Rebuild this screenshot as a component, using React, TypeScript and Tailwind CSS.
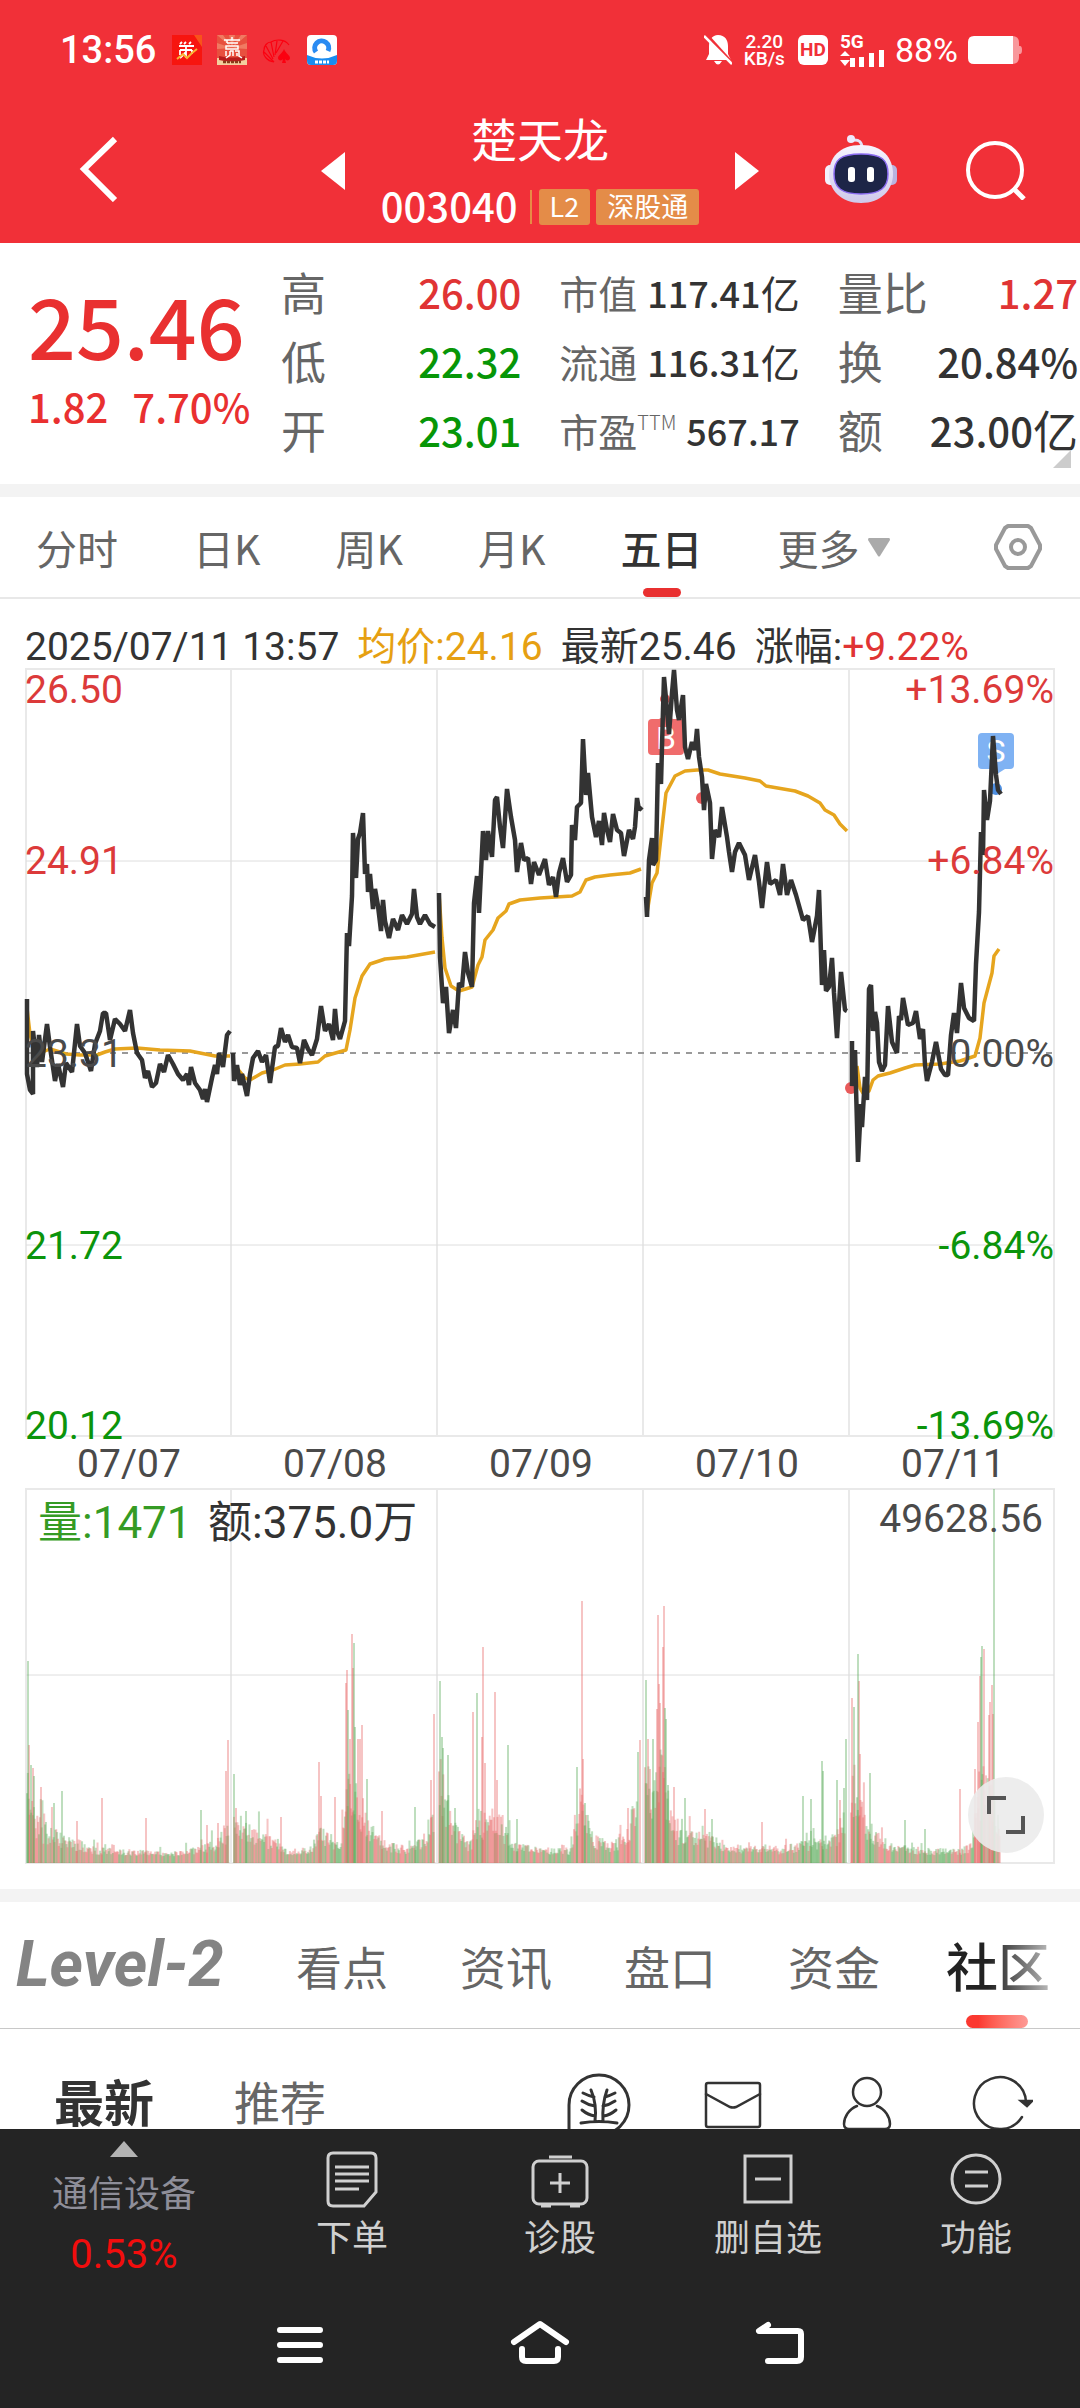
import type { ReactNode } from "react";

type Point = [number, number];

const quotes = [
  [
    { label: "高", value: "26.00", color: "text-[#e03434]" },
    { label: "低", value: "22.32", color: "text-[#079607]" },
    { label: "开", value: "23.01", color: "text-[#079607]" },
  ],
  [
    { label: "量比", value: "1.27", color: "text-[#e03434]" },
    { label: "换", value: "20.84%", color: "text-[#333]" },
    { label: "额", value: "23.00", unit: "亿", color: "text-[#333]" },
  ],
];

const marketValues = [
  { label: "市值", value: "117.41", unit: "亿" },
  { label: "流通", value: "116.31", unit: "亿" },
  { label: "市盈", sup: "TTM", value: "567.17" },
];

const days = ["07/07", "07/08", "07/09", "07/10", "07/11"];
const dayLines = [26, 231, 437, 643, 849, 1054];

const prices = [
  "27,331 27,406 30,422 33,426 33,363 37,399 39,367 42,394 47,356 50,379 55,413 58,396 63,419 66,395 72,404 77,356 80,378 85,385 91,403 95,376 100,363 103,345 106,345 110,372 115,351 120,356 125,363 130,342 133,365 137,385 142,392 145,410 148,403 152,419 156,415 160,396 164,404 168,387 173,396 178,406 183,412 187,406 189,417 191,399 195,415 200,422 203,431 205,421 207,434 212,410 215,397 217,406 219,385 223,399 227,367 230,363",
  "233,385 234,413 237,397 240,417 242,406 247,428 250,406 253,390 258,383 262,394 266,387 270,415 275,379 278,378 281,360 285,374 288,367 292,379 297,380 300,395 304,372 308,381 312,387 317,371 321,338 325,363 329,356 333,372 335,341 337,363 340,371 345,353 347,265 349,278 352,228 353,165 356,210 358,171 360,165 363,145 365,206 367,196 368,224 370,206 373,241 375,221 378,238 381,263 383,232 385,253 389,270 393,251 398,262 402,247 407,256 412,246 414,221 417,249 420,256 425,247 430,256 435,259",
  "439,225 440,289 443,335 446,319 449,365 453,342 456,360 459,315 462,319 465,284 468,305 472,319 474,235 477,208 479,245 483,163 486,192 488,163 492,189 495,132 497,129 500,159 503,180 507,121 511,149 515,172 517,204 521,175 524,192 528,190 531,216 534,194 539,207 545,191 549,217 553,209 556,229 559,205 563,190 567,214 571,207 572,157 575,172 577,139 581,135 583,71 586,127 588,105 592,149 596,169 599,153 602,177 604,145 607,162 610,174 613,146 617,162 621,165 624,188 629,162 633,171 635,159 637,130 639,142 642,139",
  "646,229 647,249 649,192 652,170 653,197 656,192 658,95 661,116 663,42 664,9 667,42 669,66 672,25 674,2 677,42 679,52 683,27 685,79 688,91 692,74 695,82 697,61 699,89 702,109 704,142 706,116 710,135 712,191 715,162 719,169 722,139 727,169 729,184 732,204 735,184 739,175 745,187 749,212 755,187 759,214 762,240 767,194 770,216 776,212 780,227 783,196 787,227 791,212 796,227 803,252 808,248 812,274 817,248 819,222 822,317 824,282 826,323 829,319 832,290 834,325 837,370 841,304 845,342 847,343",
  "852,373 852,418 855,382 858,494 861,436 862,459 865,409 867,432 869,321 871,317 873,363 875,344 877,355 879,394 882,403 885,397 888,338 892,374 897,385 899,348 901,352 903,330 908,357 913,355 916,343 920,371 923,361 925,397 927,413 932,394 936,374 941,401 945,407 948,407 951,367 954,345 957,365 961,315 964,340 969,350 974,353 976,296 979,244 981,164 983,187 984,122 987,152 990,133 993,68 996,107 998,122 1001,126",
];

const averages = [
  "27,340 30,366 35,385 45,383 50,381 60,384 66,386 80,387 97,387 105,384 115,381 137,380 160,382 190,383 205,386 215,388 230,388",
  "237,400 245,410 250,412 262,405 273,402 285,397 300,396 318,394 325,388 346,382 350,362 355,330 362,308 370,296 385,291 407,289 435,284",
  "439,225 442,270 445,300 451,318 459,323 472,319 478,297 482,289 485,272 493,262 498,250 506,243 509,236 520,232 540,230 572,228 580,224 586,212 595,209 610,207 630,205 641,201",
  "647,245 652,215 657,205 662,160 666,125 675,108 685,103 697,102 708,102 720,106 745,110 760,113 766,118 795,123 808,128 820,135 825,142 834,147 840,156 847,163",
  "857,398 860,420 863,425 869,423 873,412 878,408 890,405 905,400 915,397 940,396 960,393 975,388 980,370 984,335 992,305 994,288 999,281",
];

// upper bound of the ordinary volume through each day: [x, height]
const volumeLevels: Point[][] = [
  [[27, 100], [36, 48], [50, 34], [70, 26], [90, 14], [130, 11], [170, 8], [190, 12], [215, 20], [229, 44]],
  [[234, 54], [245, 44], [270, 24], [290, 11], [310, 13], [320, 36], [340, 18], [347, 90], [360, 72], [370, 40], [390, 18], [410, 14], [425, 30], [434, 60]],
  [[439, 105], [447, 75], [460, 32], [470, 18], [478, 54], [490, 46], [500, 46], [515, 18], [540, 14], [570, 12], [583, 80], [590, 30], [610, 19], [625, 28], [637, 72]],
  [[645, 105], [655, 84], [663, 125], [670, 64], [680, 32], [710, 28], [730, 16], [780, 14], [820, 24], [835, 30], [845, 54]],
  [[851, 115], [860, 66], [870, 40], [890, 17], [930, 12], [960, 12], [972, 18], [978, 90], [990, 100], [1000, 32]],
];

// single minutes that stand out, split by direction
const upSpikes: Point[] = [
  [29, 118], [33, 95], [41, 76], [77, 42], [102, 65], [146, 45], [207, 38], [218, 40], [226, 92], [228, 123],
  [236, 55], [281, 46], [319, 101], [321, 67], [335, 66], [346, 180], [347, 193], [350, 124], [352, 229], [353, 195],
  [358, 124], [360, 124], [362, 138], [382, 52], [431, 83], [434, 149],
  [473, 151], [482, 126], [483, 216], [485, 100], [495, 171], [497, 83], [582, 262], [583, 104], [628, 55], [640, 123],
  [648, 124], [650, 94], [657, 154], [658, 248], [659, 179], [660, 160], [663, 216], [664, 257], [674, 76], [705, 54], [762, 41], [840, 63],
  [852, 165], [859, 182], [860, 109], [960, 74], [975, 94], [978, 141], [980, 187], [984, 214], [989, 148], [990, 161], [992, 178], [993, 149],
];
const downSpikes: Point[] = [
  [28, 202], [31, 98], [34, 87], [54, 60], [62, 72], [201, 53],
  [234, 89], [246, 52], [348, 153], [354, 220], [355, 136], [367, 84], [415, 56],
  [440, 182], [442, 126], [443, 115], [448, 108], [455, 55], [477, 170], [508, 118], [517, 44], [577, 96], [585, 60], [638, 111],
  [646, 183], [653, 124], [665, 155], [666, 144], [668, 78], [685, 65], [712, 44], [803, 67], [811, 64], [822, 102], [823, 92], [837, 83], [844, 75], [846, 124],
  [854, 156], [858, 209], [870, 90], [905, 43], [925, 34], [981, 206], [982, 217], [994, 374],
];

const levelAt = (levels: Point[], x: number) => {
  const next = levels.findIndex(([px]) => px >= x);
  if (next <= 0) return levels[0][1];
  const [x0, y0] = levels[next - 1];
  const [x1, y1] = levels[next];
  return y0 + ((y1 - y0) * (x - x0)) / (x1 - x0);
};

const buildBars = () => {
  let seed = 11;
  const rand = () => {
    seed = (seed * 16807) % 2147483647;
    return seed / 2147483647;
  };
  const bars: { x: number; h: number; up: boolean }[] = [];
  volumeLevels.forEach((levels) => {
    const end = levels[levels.length - 1][0];
    for (let x = levels[0][0]; x < end; x += 0.86) {
      const burst = rand() > 0.95 ? 1.6 : 1;
      bars.push({ x, h: levelAt(levels, x) * (0.4 + rand() * 0.6) * burst + 3, up: rand() > 0.5 });
    }
  });
  upSpikes.forEach(([x, h]) => bars.push({ x, h, up: true }));
  downSpikes.forEach(([x, h]) => bars.push({ x, h, up: false }));
  return bars;
};

const bars = buildBars();

const StatusBar = () => (
  <div className="flex h-[100px] items-center pl-[60px] pr-[58px] text-white">
    <span className="font-[Roboto,sans-serif] text-[38px] font-medium leading-[48px]">13:56</span>
    <div className="ml-[16px] flex gap-[15px]">
      <svg width="30" height="30" viewBox="0 0 30 30">
        <rect width="30" height="30" fill="#f7150f" />
        <path d="M22 0h8v12z" fill="#f8531a" />
        <path d="M8 9l2-2M12 9l2-2M17 9l2-2M7 11h15M8 15h12M14 11v12M8 15v5M20 15v4M14 17l-6 6" stroke="#fff" strokeWidth="1.8" fill="none" />
        <path d="M5 24l6-5 4 4 5-5 5-4" stroke="#f9b233" strokeWidth="2" fill="none" />
      </svg>
      <svg width="30" height="30" viewBox="0 0 30 30">
        <rect width="30" height="30" fill="#e8503f" />
        <path d="M15 13L0 0h6zM15 13L12 0h6zM15 13L24 0h6zM15 13L0 8v6zM15 13l15-5v6z" fill="#f07a62" />
        <path d="M0 23h30v7H0z" fill="#f3cf9e" />
        <path d="M2 21q13 3 26 0v4q-13 3-26 0z" fill="#b81c1c" />
        <path d="M15 2v3M7 5h16M10 8h11M10 5v3M9 11h12v3H9zM9 16v5M13 16v4l-4 3M13 16h3v5M18 16h4v5l3 2M20 18v3" stroke="#fff" strokeWidth="1.5" fill="none" />
        <path d="M6 27h18" stroke="#8a3b1a" strokeWidth="2.5" strokeDasharray="3 1" />
      </svg>
      <svg width="30" height="30" viewBox="0 0 30 30" fill="none">
        <path d="M12 27C5 26 0 20 2 15c0-4 3-8 7-8 5-3 14-3 18 3M12 27L2 17M11 24L4 11M12 22L9 7M13 20L15 6M14 18L21 6" stroke="#fb0010" strokeWidth="1.2" />
        <path d="M22 14c2 5 6 6 6 9 0 3-4 3-5 1l1 4h-4l1-4c-1 2-5 2-5-1 0-3 4-4 6-9z" fill="#fb0010" />
      </svg>
      <svg width="30" height="30" viewBox="0 0 30 30">
        <rect width="30" height="30" rx="4" fill="#fff" />
        <path d="M0 20q15 7 30 0v6a4 4 0 0 1-4 4H4a4 4 0 0 1-4-4z" fill="#1a8cf0" />
        <path d="M9 17a7 7 0 1 1 12-1" stroke="#2a8bf2" strokeWidth="5" fill="none" />
        <path d="M8 27h14" stroke="#fff" strokeWidth="3" strokeDasharray="3 1" />
      </svg>
    </div>
    <div className="ml-auto flex items-center">
      <svg width="28" height="32" viewBox="0 0 28 32">
        <path d="M14 1c7 0 10 5 10 11v8l3 6H2l3-6v-8C5 6 8 1 14 1zM10 27h8q-4 7-8 0z" fill="#fff" />
        <path d="M2 0l28 31" stroke="#f13038" strokeWidth="3" />
        <path d="M0 2l28 28" stroke="#fff" strokeWidth="2.5" />
      </svg>
      <span className="ml-[12px] text-center font-[Roboto,sans-serif] text-[19px] font-medium leading-[17px]">
        2.20
        <br />
        KB/s
      </span>
      <span className="ml-[13px] flex h-[30px] w-[30px] items-center justify-center rounded-[6px] bg-white font-[Roboto,sans-serif] text-[19px] font-bold text-[#f13038]">
        HD
      </span>
      <div className="ml-[12px] w-[46px] font-[Roboto,sans-serif] text-[19px] font-bold leading-[15px]">
        5G
        <svg width="46" height="18" viewBox="0 0 46 18" fill="#fff">
          <path d="M0 7l5-5 5 5zM0 11h10l-5 6zM10 9h5v9h-5zM19 8h5v10h-5zM29 4h5v14h-5zM39 1h5v17h-5z" />
        </svg>
      </div>
      <span className="ml-[9px] font-[Roboto,sans-serif] text-[34px] leading-[40px]">88%</span>
      <svg className="ml-[10px]" width="54" height="28" viewBox="0 0 54 28">
        <path d="M44 0q7 0 7 7v3h1q2 0 2 4t-2 4h-1v3q0 7-7 7z" fill="#f8979b" />
        <path d="M6 0h39v28H6q-6 0-6-6V6q0-6 6-6z" fill="#fff" />
      </svg>
    </div>
  </div>
);

const Header = () => (
  <header className="h-[243px] bg-[#f13038] text-white">
    <StatusBar />
    <div className="relative flex h-[143px] items-start justify-center">
      <button aria-label="返回" className="absolute left-[76px] top-[36px]">
        <svg width="46" height="66" viewBox="0 0 46 66" fill="none" stroke="#fff" strokeWidth="6">
          <path d="M39 3L8 33l31 31" />
        </svg>
      </button>
      <button aria-label="上一只" className="absolute left-[321px] top-[52px]">
        <svg width="24" height="38" viewBox="0 0 24 38" fill="#fff">
          <path d="M24 0v38L0 19z" />
        </svg>
      </button>
      <div className="flex flex-col items-center pt-[10px]">
        <h1 className="text-[46px] leading-[54px]">楚天龙</h1>
        <div className="mt-[25px] flex h-[36px] items-center">
          <span className="pb-[4px] text-[40px] font-medium leading-[36px]">003040</span>
          <span className="ml-[12px] h-[34px] w-[2px] bg-[#e88b45]" />
          <span className="ml-[7px] h-[36px] rounded-[3px] bg-[#e48c48] px-[11px] text-[27px] leading-[34px]">L2</span>
          <span className="ml-[6px] h-[36px] rounded-[3px] bg-[#e48c48] px-[11px] text-[27px] leading-[34px]">深股通</span>
        </div>
      </div>
      <button aria-label="下一只" className="absolute right-[321px] top-[52px]">
        <svg width="24" height="38" viewBox="0 0 24 38" fill="#fff">
          <path d="M0 0v38l24-19z" />
        </svg>
      </button>
      <button aria-label="智能助手" className="absolute right-[183px] top-[35px]">
        <svg width="72" height="68" viewBox="0 0 72 68">
          <defs>
            <linearGradient id="shell" x1="0" y1="0" x2="0" y2="1">
              <stop offset="0" stopColor="#f7f5ff" />
              <stop offset="1" stopColor="#cfc9ea" />
            </linearGradient>
          </defs>
          <path d="M28 5q9-1 9 8" stroke="#e4e0f7" strokeWidth="3" fill="none" />
          <circle cx="26" cy="4" r="4" fill="#eeeafd" />
          <rect y="30" width="12" height="20" rx="5" fill="#f3f1fc" />
          <rect x="60" y="30" width="12" height="20" rx="5" fill="#b9b4e0" />
          <path d="M36 10c22 0 32 13 32 29S56 68 36 68 4 55 4 39s10-29 32-29z" fill="url(#shell)" />
          <path d="M36 19c21 0 27 6 27 20s-8 20-27 20S9 53 9 39s6-20 27-20z" fill="#1d2547" stroke="#8a6bf0" strokeWidth="1.5" />
          <rect x="23" y="32" width="7" height="15" rx="3" fill="#fff" />
          <rect x="42" y="32" width="7" height="15" rx="3" fill="#fff" />
        </svg>
      </button>
      <button aria-label="搜索" className="absolute right-[54px] top-[40px]">
        <svg width="60" height="60" viewBox="0 0 60 60" fill="none" stroke="#fff" strokeWidth="4">
          <circle cx="29" cy="30" r="27" />
          <path d="M47 48l11 11" strokeWidth="5" />
        </svg>
      </button>
    </div>
  </header>
);

const Quote = () => (
  <section className="relative flex gap-[38px] border-b-[13px] border-[#f3f3f3] pb-[20px] pr-[2px] pt-[14px]">
    <div className="w-[243px] shrink-0 whitespace-nowrap pl-[28px] pt-[22px] text-[#e93030]">
      <div className="text-[84px] font-medium leading-[90px]">25.46</div>
      <div className="mt-[12px] flex gap-[24px] text-[40px] font-medium leading-[50px]">
        <span>1.82</span>
        <span>7.70%</span>
      </div>
    </div>
    <QuoteColumn rows={quotes[0]} />
    <div className="flex-1">
      {marketValues.map((m) => (
        <div key={m.label} className="flex h-[69px] items-center whitespace-nowrap">
          <span className="flex text-[39px] leading-[48px] text-[#666]">
            {m.label}
            {m.sup && <span className="text-[20px] font-light leading-[32px]">{m.sup}</span>}
          </span>
          <span className="ml-auto text-[36px] font-medium leading-[48px] text-[#333]">{m.value}</span>
          {m.unit && <span className="text-[39px] leading-[48px] text-[#333]">{m.unit}</span>}
        </div>
      ))}
    </div>
    <QuoteColumn rows={quotes[1]} />
    <svg className="absolute bottom-[16px] right-[9px]" width="18" height="18" viewBox="0 0 18 18">
      <path d="M18 0v18H0z" fill="#ccc" />
    </svg>
  </section>
);

const QuoteColumn = ({ rows }: { rows: { label: string; value: string; unit?: string; color: string }[] }) => (
  <div className="flex-1">
    {rows.map((row) => (
      <div key={row.label} className="flex h-[69px] items-center whitespace-nowrap">
        <span className="text-[45px] leading-[54px] text-[#666]">{row.label}</span>
        <span className={`ml-auto text-[40px] font-medium leading-[54px] ${row.color}`}>{row.value}</span>
        {row.unit && <span className="text-[45px] leading-[54px] text-[#333]">{row.unit}</span>}
      </div>
    ))}
  </div>
);

const PeriodTabs = () => (
  <nav className="flex h-[102px] items-center gap-[75px] whitespace-nowrap border-b-2 border-[#e8e8e8] pl-[36px] pr-[38px] text-[41px] leading-[50px] text-[#666]">
    <button>分时</button>
    <button>日K</button>
    <button>周K</button>
    <button>月K</button>
    <button className="relative flex h-full items-center font-medium text-[#333]">
      五日
      <span className="absolute bottom-0 left-[22px] h-[9px] w-[38px] rounded-full bg-[#e93030]" />
    </button>
    <button className="flex items-center gap-[8px]">
      更多
      <svg width="22" height="19" viewBox="0 0 22 19">
        <path d="M1 0h20q1 0 1 2L12 18q-1 1-2 0L0 2q0-2 1-2z" fill="#aaa" />
      </svg>
    </button>
    <button aria-label="设置" className="ml-auto">
      <svg width="48" height="48" viewBox="0 0 48 48" fill="none" stroke="#999" strokeWidth="4" strokeLinejoin="round">
        <path d="M14 3h20l3 2 9 17v4l-9 17-3 2H14l-3-2-9-17v-4l9-17z" />
        <circle cx="24" cy="24" r="7" />
      </svg>
    </button>
  </nav>
);

const Chart = () => (
  <section className="relative border-b-[13px] border-[#f3f3f3] pb-[25px] font-[Roboto,'Noto_Sans_CJK_SC',sans-serif]">
    <div className="flex h-[69px] items-end gap-[18px] whitespace-nowrap pl-[25px] text-[39px] leading-[42px] text-[#333]">
      <span>2025/07/11 13:57</span>
      <span className="text-[#e6a012]">均价:24.16</span>
      <span>最新25.46</span>
      <span>
        涨幅:<span className="text-[#e03434]">+9.22%</span>
      </span>
    </div>
    <svg className="block w-full" viewBox="0 0 1080 1196" fontSize="39">
      <g fill="none" stroke="#e9e9e9" strokeWidth="2">
        <path d="M26 1h1028v767H26zM26 821h1028v374H26z" />
        {dayLines.slice(1, 5).map((x) => (
          <path key={x} d={`M${x} 1v767M${x} 821v374`} />
        ))}
        <path d="M26 193h1028M26 577h1028M26 1007h1028" stroke="#dedede" strokeWidth="1" />
        <path d="M26 385h1028" stroke="#999" strokeDasharray="6 6" />
      </g>

      {bars.map((b, i) => (
        <rect key={i} x={b.x - 1} y={1195 - b.h} width="2" height={b.h} fill={b.up ? "#e86464" : "#55a855"} opacity="0.38" />
      ))}

      <circle cx="665" cy="31" r="5" fill="#e85a5a" />
      <circle cx="702" cy="130" r="6" fill="#e85a5a" />
      <circle cx="851" cy="420" r="6" fill="#e85a5a" />
      <path d="M659 51l7-4 7 4z" fill="#f06c6c" />
      <rect x="648" y="51" width="36" height="36" rx="4" fill="#f06c6c" />
      <text x="666" y="81" textAnchor="middle" fontSize="32" fill="#fff">B</text>
      <path d="M991 101l6 5 8-5z" fill="#7fb2f3" />
      <rect x="978" y="65" width="36" height="36" rx="4" fill="#7fb2f3" />
      <text x="996" y="94" textAnchor="middle" fontSize="32" fill="#fff">S</text>
      <circle cx="996" cy="121" r="6" fill="#4f8fe0" />

      <g fill="none" stroke="#e6a51e" strokeWidth="3.5" strokeLinejoin="round">
        {averages.map((points) => (
          <polyline key={points} points={points} />
        ))}
      </g>
      <g fill="none" stroke="#333" strokeWidth="4.5" strokeLinejoin="bevel">
        {prices.map((points) => (
          <polyline key={points} points={points} />
        ))}
      </g>

      <g fill="#dc3a3a">
        <text x="25" y="35">26.50</text>
        <text x="25" y="206">24.91</text>
        <text x="1054" y="35" textAnchor="end">+13.69%</text>
        <text x="1054" y="206" textAnchor="end">+6.84%</text>
      </g>
      <g fill="#4a4a4a">
        <text x="25" y="399">23.31</text>
        <text x="1054" y="399" textAnchor="end">0.00%</text>
        {days.map((day, i) => (
          <text key={day} x={129 + i * 206} y="809" textAnchor="middle">{day}</text>
        ))}
        <text x="1043" y="864" textAnchor="end">49628.56</text>
      </g>
      <g fill="#0b940b">
        <text x="25" y="591">21.72</text>
        <text x="25" y="771">20.12</text>
        <text x="1054" y="591" textAnchor="end">-6.84%</text>
        <text x="1054" y="771" textAnchor="end">-13.69%</text>
      </g>
      <g fontSize="44">
        <text x="38" y="870" fill="#359b24">量:1471</text>
        <text x="208" y="870" fill="#333">额:375.0万</text>
      </g>
    </svg>
    <button aria-label="全屏" className="absolute bottom-[36px] right-[36px] flex h-[76px] w-[76px] items-center justify-center rounded-full bg-[#ebebeb]/90">
      <svg width="38" height="38" viewBox="0 0 38 38" fill="none" stroke="#555" strokeWidth="4">
        <path d="M2 18V2h17M36 20v16H19" />
      </svg>
    </button>
  </section>
);

const SectionTabs = () => (
  <nav className="flex h-[127px] items-center gap-[72px] whitespace-nowrap border-b border-[#c8c8c8] pl-[16px] text-[46px] leading-[56px] text-[#666]">
    <button className="w-[208px] text-left font-[Roboto,sans-serif] text-[64px] font-bold italic text-[#848484]">Level-2</button>
    <button>看点</button>
    <button>资讯</button>
    <button>盘口</button>
    <button>资金</button>
    <button className="relative -mx-[6px] flex h-full items-center text-[52px] font-medium">
      <span className="bg-linear-to-r from-[#222] from-40% to-[#bbb] bg-clip-text text-transparent">社区</span>
      <span className="absolute bottom-0 left-[20px] h-[13px] w-[62px] rounded-full bg-linear-to-r from-[#fb3830] from-20% to-[#fd9a96]" />
    </button>
  </nav>
);

const FeedBar = () => (
  <div className="h-[100px] overflow-hidden">
    <div className="flex h-[150px] items-center pl-[54px] pr-[12px]">
      <button className="pb-[8px] text-[50px] font-bold leading-[50px] text-[#333]">最新</button>
      <button className="ml-[80px] pb-[8px] text-[46px] leading-[50px] text-[#666]">推荐</button>
      <div className="ml-auto flex">
        <FeedIcon label="韭菜">
          <path d="M2 64V33A30 30 0 1 1 32 63q-8 1-14 1z" strokeWidth="3" />
          <path d="M14 51q18-3 36 0M24 18q6 14 4 31M16 21q6 3 11 4M15 29q6 4 13 5M15 38q6 5 13 6M40 18q-5 14-4 31M48 21q-6 3-10 4M48 29q-6 4-12 5M49 38q-6 5-12 6" strokeWidth="3" />
        </FeedIcon>
        <FeedIcon label="消息">
          <rect x="5" y="11" width="54" height="44" rx="2" />
          <path d="M5 22l24 13q3 1 6 0l24-13" />
        </FeedIcon>
        <FeedIcon label="我的">
          <circle cx="32" cy="20" r="14" />
          <path d="M22 34C14 37 9 45 9 52q0 5 5 5h36q5 0 5-5c0-7-5-15-13-18" />
        </FeedIcon>
        <FeedIcon label="刷新">
          <path d="M53 45A26 26 0 1 1 57 30" />
          <path d="M52 29h11l-5 5z" fill="#333" />
        </FeedIcon>
      </div>
    </div>
  </div>
);

const FeedIcon = ({ label, children }: { label: string; children: ReactNode }) => (
  <button aria-label={label} className="flex w-[134px] justify-center">
    <svg width="64" height="64" viewBox="0 0 64 64" fill="none" stroke="#333" strokeWidth="2.5" strokeLinecap="round">
      {children}
    </svg>
  </button>
);

const ToolButton = ({ label, children }: { label: string; children: ReactNode }) => (
  <button className="flex flex-1 flex-col items-center pt-[20px] text-[36px] leading-[44px] text-[#d0d0d0]">
    <svg className="mb-[4px]" width="60" height="60" viewBox="0 0 60 60" fill="none" stroke="#d0d0d0" strokeWidth="3">
      {children}
    </svg>
    {label}
  </button>
);

const BottomBar = () => (
  <footer className="grow bg-[#242424]">
    <div className="flex h-[162px] items-start">
      <button className="flex w-[248px] flex-col items-center pt-[12px]">
        <svg width="28" height="16" viewBox="0 0 28 16">
          <path d="M14 0l14 16H0z" fill="#b3b3b3" />
        </svg>
        <span className="mt-[12px] text-[36px] leading-[44px] text-[#8e8e99]">通信设备</span>
        <span className="mt-[20px] font-[Roboto,sans-serif] text-[40px] leading-[44px] text-[#f20d0d]">0.53%</span>
      </button>
      <ToolButton label="下单">
        <path d="M11 4h38q5 0 5 5v34L42 57H11q-5 0-5-5V9q0-5 5-5zM13 18h34M13 25h34M13 32h34M13 40h24" />
      </ToolButton>
      <ToolButton label="诊股">
        <rect x="3" y="12" width="54" height="43" rx="6" />
        <path d="M19 8h23M30 24v20M20 34h20M11 57h10M40 57h10" />
      </ToolButton>
      <ToolButton label="删自选">
        <path d="M7 7h46v46H7zM17 30h26" />
      </ToolButton>
      <ToolButton label="功能">
        <circle cx="30" cy="30" r="24" />
        <path d="M19 23h23M19 37h23" />
      </ToolButton>
    </div>
    <div className="flex h-[106px] items-center justify-center">
      <button aria-label="最近任务" className="flex w-[240px] justify-center">
        <svg width="60" height="48" viewBox="0 0 60 48" stroke="#fff" strokeWidth="6" strokeLinecap="round">
          <path d="M10 10h40M10 25h40M10 40h40" />
        </svg>
      </button>
      <button aria-label="主屏幕" className="flex w-[240px] justify-center">
        <svg width="60" height="48" viewBox="0 0 60 48" fill="none" stroke="#fff" strokeWidth="6" strokeLinecap="round" strokeLinejoin="round">
          <path d="M4 22L30 4l26 18M12 29v8q0 4 4 4h28q4 0 4-4v-8" />
        </svg>
      </button>
      <button aria-label="后退" className="flex w-[240px] justify-center">
        <svg width="60" height="48" viewBox="0 0 60 48" fill="none" stroke="#fff" strokeWidth="6" strokeLinecap="round" strokeLinejoin="round">
          <path d="M18 5l-9 6h39q3 0 3 3v23q0 4-4 4H18" />
        </svg>
      </button>
    </div>
  </footer>
);

const App = () => {
  return (
    <div className="flex min-h-screen flex-col overflow-hidden bg-white font-['Noto_Sans_CJK_SC',sans-serif]">
      <Header />
      <Quote />
      <PeriodTabs />
      <Chart />
      <SectionTabs />
      <FeedBar />
      <BottomBar />
    </div>
  );
};

export default App;
